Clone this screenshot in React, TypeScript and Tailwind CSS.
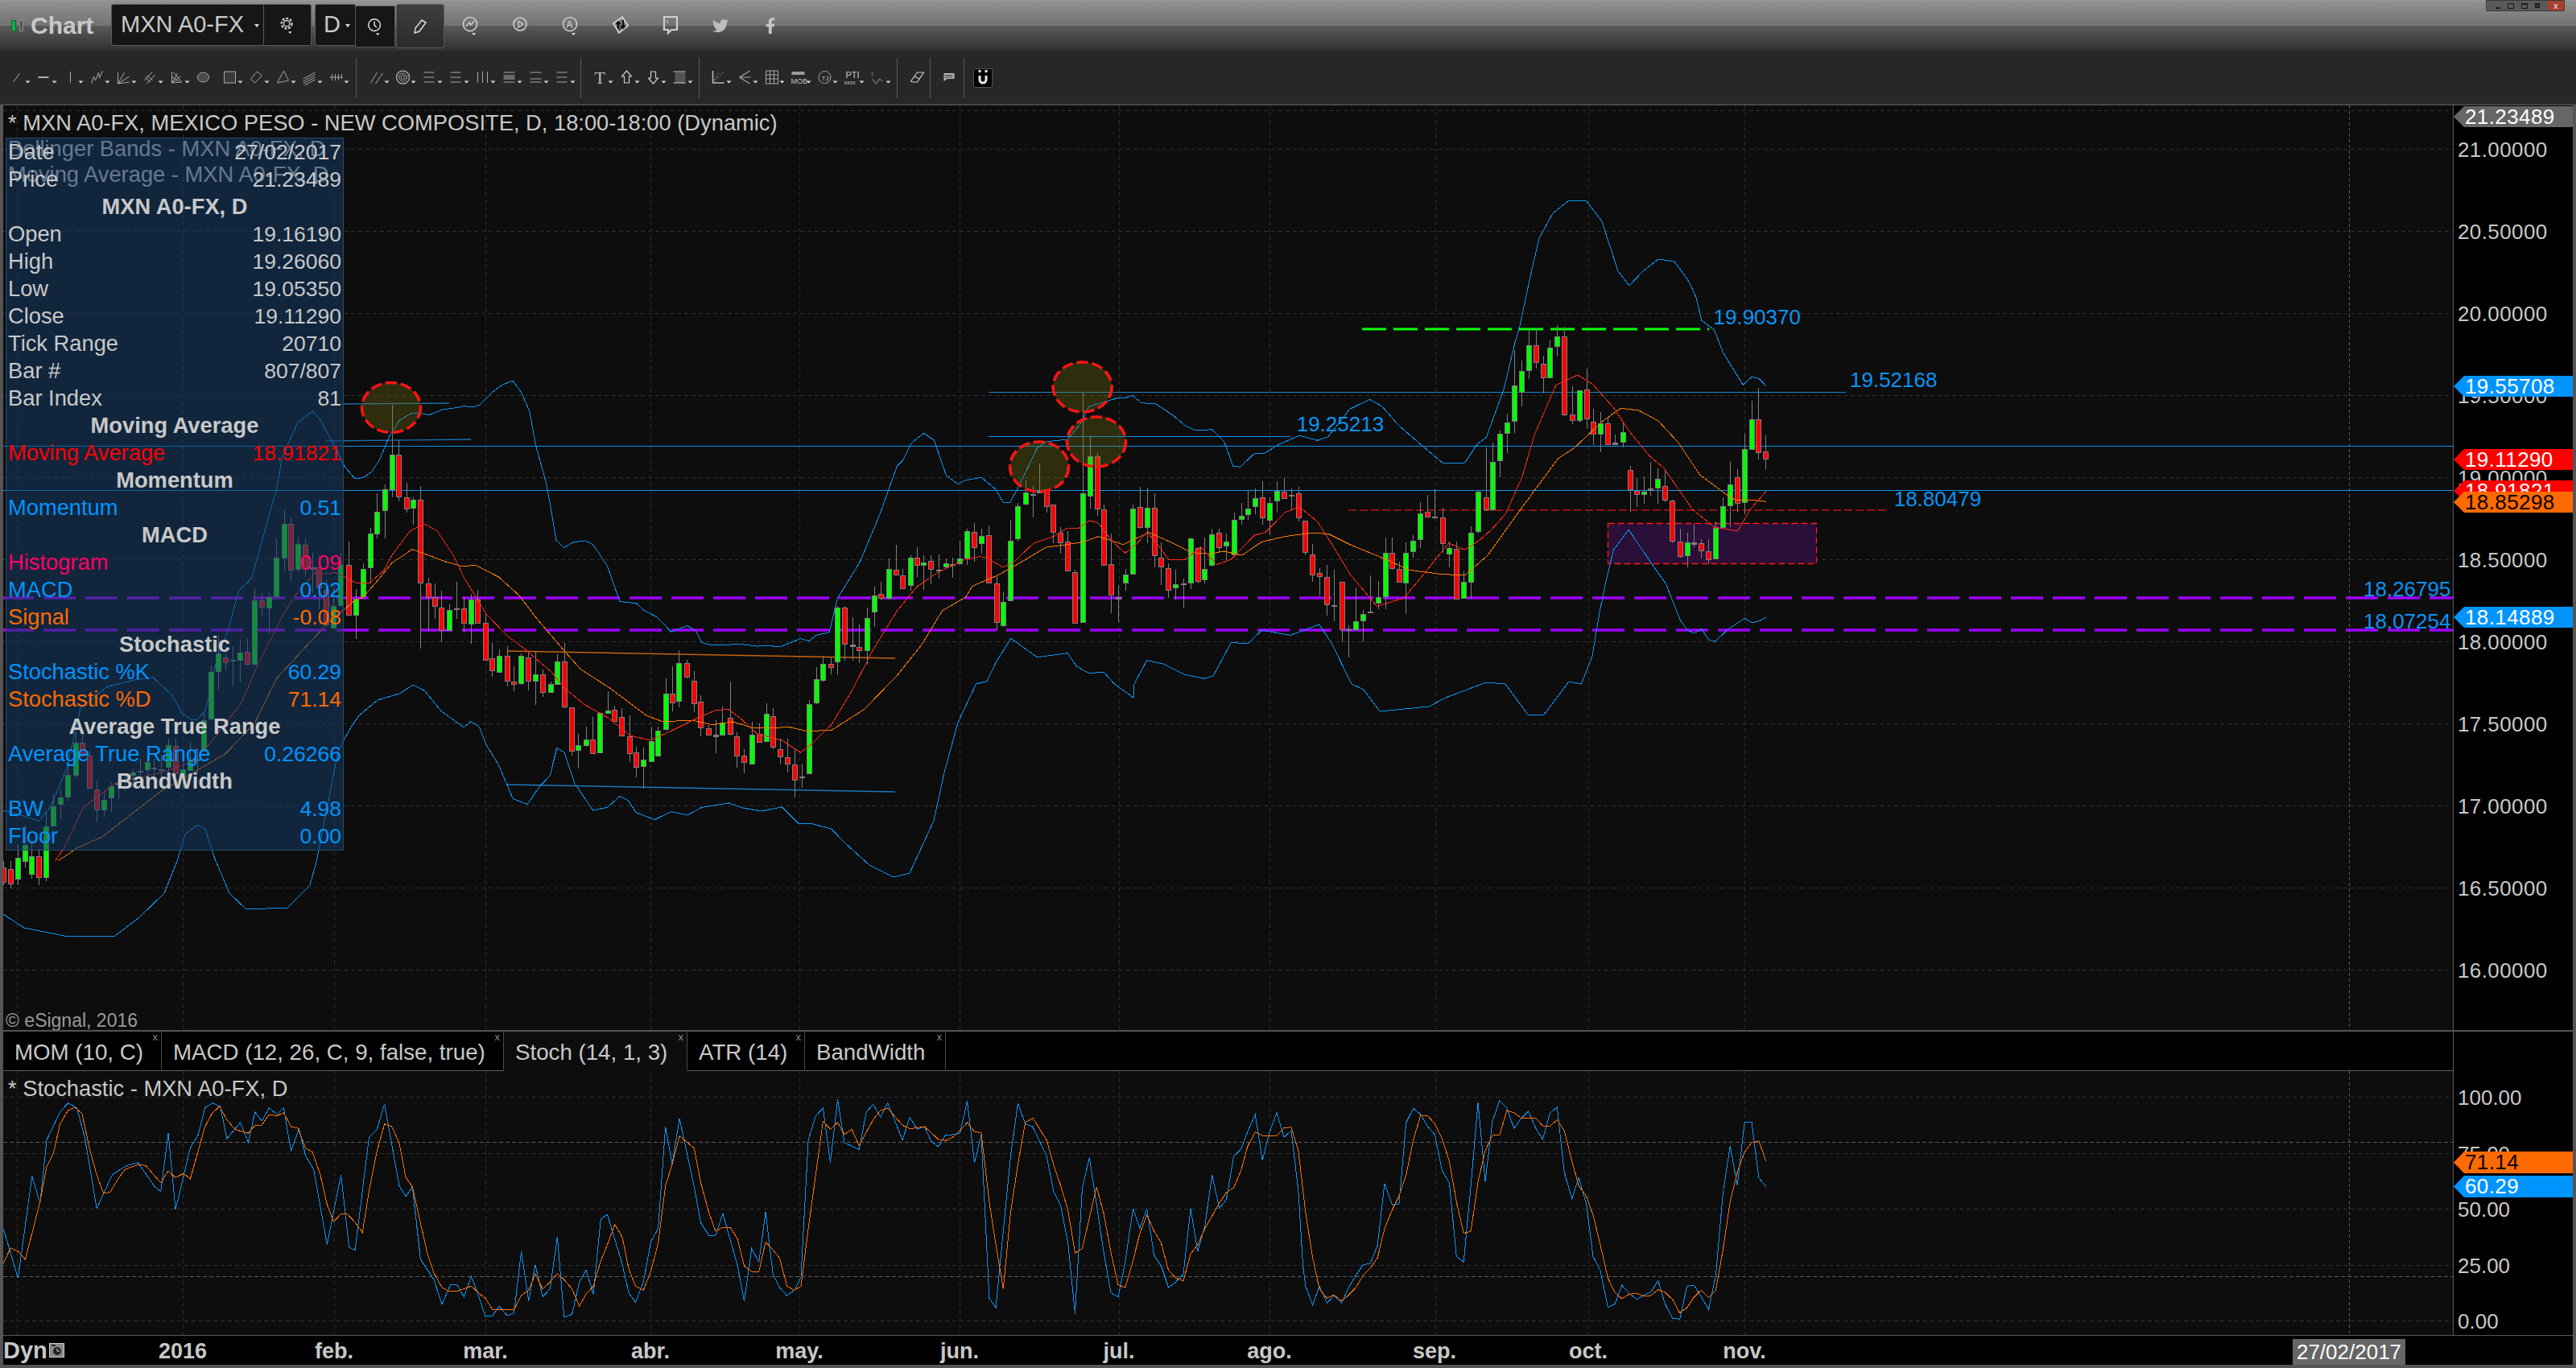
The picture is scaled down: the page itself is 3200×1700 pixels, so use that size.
import React from "react";
import { FaTwitter, FaFacebookF } from "react-icons/fa";

type Pt = [number, number];
const seg = (ox: number, sx: number, oy: number, sy: number, s: string): Pt[] =>
  s.trim().split(/\s+/).map((p) => {
    const [a, b] = p.split(",").map(Number);
    return [ox + a / sx, oy + b / sy] as Pt;
  });
const Z3 = (s: string) => seg(0, 3, 130, 3, s);
const Z4 = (s: string) => seg(0, 3, 570, 3, s);
const Z8 = (s: string) => seg(1150, 2.24, 400, 3, s);
const Z9 = (s: string) => seg(1750, 2.24, 350, 3, s);
const Z10 = (s: string) => seg(400, 1.96, 430, 2.613, s);
const R = (s: string) => seg(0, 1, 0, 1, s);
const pts = (a: Pt[]) => a.map((p) => p[0].toFixed(1) + "," + p[1].toFixed(1)).join(" ");

const upper = [
  ...Z4("10,1310 80,1330 145,1350 190,1295 250,1150 300,930 400,850 500,825 570,815 640,880 680,950 710,972 735,972 765,940 780,880 805,760 850,640 890,490 925,460 940,440 1000,220 1030,118 1050,0"),
  ...Z3("1080,1250 1110,1185 1165,1143 1190,1170 1240,1260 1285,1350"),
  ...Z10("80,430 100,428 120,410 140,370 165,290 190,240 220,217 240,218 260,224 295,206 330,200 345,195 370,198 385,190 415,150 440,125 465,113 485,150 505,210 520,320 545,440 555,510 570,630 590,655 610,638 640,632 660,645 695,715 725,830 765,835 780,855 815,880 850,928 890,908 910,925 925,963 950,972 1020,968 1060,975 1080,972 1115,977 1165,950 1185,958 1205,938 1235,930 1255,820 1310,700 1360,540 1400,390 1415,370 1435,315 1465,283 1490,305 1520,420 1548,448"),
  ...Z8("112,590 155,580 195,625 215,672 235,672 260,610 310,470 335,447 395,438 430,380 455,315 500,298 535,283 555,284 575,274 600,302 640,305 690,350 720,385 745,402 775,405 795,400 830,445 855,538 875,541 915,490 940,492 985,455 1040,424 1090,442 1120,428 1180,325 1235,289 1270,315 1315,385 1380,460 1440,528 1500,525 1535,455 1560,430"),
  ...Z9("265,400 295,230 310,160 335,0"),
  ...R("1912,296 1929,265 1949,249 1970,249 1990,275 2010,337 2024,355 2041,337 2060,322 2080,325"),
  ...Z9("780,0 800,60 815,145 850,180 875,265 930,385 955,355 975,362 995,390"),
];
const lower = [
  ...R("4,1136 30,1153 80,1163 143,1163 173,1140 204,1110"),
  ...Z4("660,1500 690,1400 735,1365 765,1380 800,1490"),
  ...R("285,1110 306,1130 357,1128 385,1100"),
  ...Z4("1180,1500 1260,1090"),
  ...Z10("65,1250 90,1200 135,1150 190,1128 222,1100 250,1120 290,1185 345,1238 362,1220 382,1235 400,1295 430,1360 465,1470 500,1488 530,1430 555,1395 572,1305 590,1320 615,1420 660,1508 695,1498 725,1462 745,1475 765,1515 810,1538 850,1512 890,1523 925,1498 990,1484 1025,1500 1070,1510 1120,1497 1160,1550 1190,1550 1240,1568"),
  ...R("1050,1048 1080,1075 1110,1090 1130,1085 1160,1020 1173,960 1190,898"),
  ...Z8("140,1350 170,1340 195,1270 237,1180 310,1250 395,1235 420,1285 455,1310 495,1305 525,1350"),
  ...R("1408,867"),
  ...Z8("580,1350 615,1262 660,1275 720,1315 775,1330 800,1320 820,1270 850,1195 895,1200 935,1150 1015,1168 1095,1128 1130,1200 1185,1350"),
  ...R("1694,857 1714,884 1775,878 1796,867 1846,848 1870,850 1898,888 1918,888 1949,847"),
  ...Z9("480,1500 510,1400 530,1240 550,1110 570,1000 612,925 680,1060 715,1125 755,1260 775,1300 795,1310 815,1295 835,1335 852,1342 890,1295 935,1255 955,1272 975,1265 995,1250"),
];
const red = [
  ...Z4("205,1500 240,1450 310,1300 430,1210 600,1170 720,1130 800,1040 900,910 960,770 1050,590 1100,510 1180,420 1200,430 1250,425"),
  ...Z10("40,740 85,770 115,770 150,730 170,680 215,600 250,578 280,600 320,680 345,750 400,870 450,940 490,980 560,1060 590,1110 640,1165 700,1210 750,1265 800,1280 850,1250 910,1210 960,1182 990,1180 1020,1210 1060,1260 1120,1280 1165,1320 1190,1295 1240,1230 1290,1120 1340,990 1400,860 1450,780 1500,735"),
  ...Z8("110,885 150,875 170,880 215,915 245,895 300,825 355,800 395,768 425,770 455,740 480,750 520,820 555,862 585,830 615,785 640,820 675,885 720,888 765,840 810,905 850,885 915,795 945,785 1000,710 1040,690 1090,745 1140,850 1180,940 1255,1060 1330,1030 1380,950 1455,825 1500,850 1540,815"),
  ...Z9("230,925 270,865 315,730 350,570 410,385 470,348 510,380 570,470 615,560 670,650 710,695 790,850 850,915 915,930 950,850 995,780"),
];
const orange = [
  ...Z4("215,1500 290,1450 380,1410 600,1240 840,1100 950,985 1030,820 1150,690 1215,620 1320,530"),
  ...Z10("100,815 130,770 170,705 220,660 250,675 300,700 340,715 375,712 430,750 480,810 520,880 590,990 630,1050 700,1110 790,1200 830,1220 900,1215 950,1230 1000,1220 1050,1240 1140,1238 1180,1250 1240,1248 1320,1180 1400,1070 1460,970 1510,860"),
  ...Z8("112,1025 130,985 200,945 260,900 335,840 385,832 440,820 480,800 550,830 620,785 680,820 740,860 790,865 830,855 880,870 935,820 1000,800 1070,787 1120,790 1180,830 1280,885 1345,925 1430,940 1500,945"),
  ...Z9("220,1020 300,870 415,660 460,620 540,520 590,472 640,480 695,520 750,600 810,720 880,790 910,815 960,815 995,820"),
];

const cnd = (ox: number, sx: number, oy: number, sy: number, s: string) =>
  s.trim().split("\n").map((l) => {
    const p = l.trim().split(/\s+/);
    return {
      x: ox + Number(p[0]) / sx,
      c: p[1],
      t: oy + Number(p[2]) / sy,
      b: oy + Number(p[3]) / sy,
      h: oy + Number(p[4]) / sy,
      l: oy + Number(p[5]) / sy,
    };
  });
const candles = [
  ...cnd(0, 1, 0, 1, `3.6 r 1078 1096 1070 1100
12.6 r 1080 1098 1070 1104
21.5 g 1066 1092 1050 1100
30.5 g 1050 1070 1025 1078
39.4 g 1064 1086 1045 1092
48.4 r 1064 1090 1055 1100
57.3 g 1027 1090 1008 1095`),
  ...cnd(0, 3, 570, 3, `199 g 1295 1368 1250 1370
226 g 1262 1285 1230 1340
253 g 1180 1260 1140 1275
281 g 1058 1178 1020 1190
305 r 1058 1105 1020 1110
332 r 1108 1228 1090 1230
359 r 1232 1308 1200 1355
386 g 1273 1308 1240 1335
413 g 1222 1265 1205 1318
440 g 1205 1215 1190 1270
466 g 1195 1205 1180 1240
494 g 1170 1180 1155 1225
521 d 1163 1167 1120 1215
548 g 1130 1158 1100 1195
574 d 1151 1155 1120 1190
601 d 1157 1160 1105 1195
628 g 1068 1150 1045 1190
655 r 1070 1172 1040 1185
682 g 1158 1180 1100 1230
709 g 1125 1160 1060 1165
735 d 1120 1125 1080 1170
760 g 975 1090 950 1095
787 g 795 970 770 975
814 g 725 790 660 860
841 r 740 757 700 790
868 d 750 754 700 850
895 g 722 748 675 830
922 r 720 765 672 770
949 g 527 765 482 770
976 r 527 552 500 585
1003 g 517 555 500 655
1030 g 370 513 300 515
1058 g 242 367 192 420
1084 r 242 413 220 458
1111 g 318 412 290 420
1138 r 320 410 300 440
1165 d 405 410 350 500
1189 r 405 480 360 560
1216 r 490 620 450 625
1243 g 548 628 480 630
1270 g 395 545 350 550`),
  ...cnd(400, 1.96, 430, 2.613, `64 r 710 872 635 875
82 g 820 873 790 950
99 g 725 815 705 820
117 g 610 720 590 770
134 g 537 607 478 625
152 g 466 535 450 625
170 g 353 465 190 490
187 r 353 490 305 505
205 r 491 527 443 542
222 g 498 525 490 580
240 r 498 767 455 982
258 r 771 815 752 925
275 r 815 845 770 885
291 r 850 923 795 962
309 g 858 923 840 925
327 d 853 856 765 885
344 r 853 900 815 930
362 g 822 900 805 968
379 r 822 897 792 900
397 r 900 1020 870 1022
414 r 1015 1054 965 1075
432 g 1007 1060 985 1062
450 r 1007 1088 975 1105
467 r 1090 1098 1040 1120
485 g 1007 1096 998 1100
502 r 1010 1087 990 1118
520 g 1066 1088 990 1165
538 r 1065 1123 1050 1140
556 g 1098 1125 1090 1127
573 g 1025 1097 1000 1100
589 r 1025 1172 965 1175
607 r 1174 1315 1172 1330
624 g 1297 1313 1260 1372
642 g 1278 1297 1235 1300
659 r 1279 1323 1205 1325
677 g 1192 1320 1190 1322
695 g 1183 1190 1120 1192
712 r 1180 1216 1168 1218
730 r 1204 1265 1175 1268
748 r 1266 1320 1200 1350
765 r 1320 1367 1300 1400
783 g 1344 1365 1305 1437
801 g 1284 1349 1235 1352
818 g 1248 1328 1235 1332
836 g 1130 1245 1080 1248
853 r 1128 1157 1040 1185
869 g 1030 1153 988 1172
887 r 1030 1075 1018 1078
905 r 1086 1158 1055 1188
922 r 1156 1240 1135 1268
940 r 1242 1263 1230 1265
958 d 1262 1266 1215 1322
975 g 1224 1263 1170 1265
993 r 1208 1261 1090 1265
1010 r 1266 1328 1255 1368
1028 r 1331 1352 1310 1388
1046 g 1261 1354 1220 1360
1064 r 1259 1285 1225 1285
1081 g 1193 1281 1160 1285
1098 r 1202 1300 1175 1308
1116 r 1310 1333 1275 1360
1133 r 1334 1356 1275 1385
1151 r 1358 1407 1310 1465
1168 d 1397 1400 1355 1435
1185 g 1162 1386 1150 1390
1203 g 1083 1160 1042 1162
1220 g 1032 1083 1005 1090
1238 r 1032 1043 1012 1065
1255 g 850 1025 845 1068
1273 r 850 968 843 1022
1291 d 970 975 880 1022
1308 r 978 988 905 1030
1326 g 884 988 850 1035
1344 g 810 862 780 912
1361 r 804 818 765 825
1379 g 725 820 690 822
1397 r 727 743 645 745
1414 r 746 787 725 790
1432 g 688 777 680 795
1449 r 688 711 652 750
1465 g 702 710 680 792`),
  ...cnd(1150, 2.24, 400, 3, `14 r 892 922 870 978
35 d 925 929 868 958
55 g 901 913 882 922
75 d 904 907 880 955
95 g 883 901 815 905
115 g 781 881 770 905
135 r 784 840 750 895
155 g 799 827 770 865
175 r 796 973 760 975
196 r 976 1120 948 1150
216 g 1045 1132 1005 1137
236 g 817 1040 738 1042
256 g 688 809 675 820
277 g 637 680 590 683
297 d 643 646 612 730
315 d 631 637 527 640
335 r 625 688 625 712
355 r 682 785 682 825
375 r 787 823 765 865
395 r 820 928 780 930
415 r 934 1123 925 1125
436 g 640 1120 263 1122
456 g 502 649 430 697
476 r 502 697 490 722
496 r 698 905 680 905
516 r 904 1018 790 1085
536 d 1027 1032 985 1120
556 g 943 973 922 1002
576 g 695 937 680 938
596 r 691 767 615 770
616 g 694 767 618 825
636 r 694 870 640 915
655 r 880 913 822 980
675 r 917 997 900 1030
695 g 977 988 925 1035
716 d 976 979 958 1068
736 g 806 972 805 995
756 r 842 964 840 975
776 g 920 960 805 975
796 g 791 905 770 912
816 r 785 838 770 862
836 g 820 835 790 888
857 g 737 867 710 868
877 g 722 733 675 755
897 g 695 717 630 738
917 g 657 688 622 718
937 r 653 727 595 755
957 g 674 736 655 795
977 g 630 667 595 710
996 r 632 655 580 660
1016 d 645 649 620 700
1036 r 640 730 615 745
1056 r 742 858 740 870
1076 r 866 940 828 968
1096 r 937 948 918 1020
1116 r 950 1053 905 1095
1136 d 1057 1060 925 1115
1157 r 970 1146 970 1195
1177 d 1147 1150 1130 1252
1197 g 1115 1146 990 1150
1217 g 1088 1111 1075 1195
1237 d 1081 1085 945 1085
1258 g 1027 1047 965 1070
1278 g 860 1023 805 1070
1298 r 860 918 805 925
1316 r 922 970 895 970
1336 g 860 970 822 1090`),
  ...cnd(1750, 2.24, 350, 3, `12 g 967 1007 945 1028
32 g 865 962 822 992
52 r 858 876 795 880
72 d 877 881 775 880
93 r 880 977 843 1010
113 g 993 1015 970 1065
133 r 995 1180 970 1182
153 g 1120 1180 1080 1182
173 g 937 1120 912 1182
193 g 784 931 778 940
214 r 805 850 618 855
233 g 673 850 600 855
254 g 568 668 555 728
274 g 525 565 492 638
294 g 388 520 255 565
313 g 333 411 295 465
333 g 238 331 175 362
353 r 238 301 175 325
373 r 307 358 277 418
393 g 247 358 218 360
413 g 205 241 163 278
433 r 205 497 168 500
454 r 496 517 390 530
474 g 406 517 406 525
494 r 403 511 325 548
514 r 523 568 475 610
534 g 529 569 485 635
554 r 529 607 505 610
574 d 601 607 570 610
595 g 562 598 525 617
615 r 703 776 687 858
635 r 779 790 732 840
654 g 782 790 725 828
673 d 771 776 672 797
693 g 736 768 695 828
713 r 763 815 698 822
733 r 817 967 812 975
754 r 970 1025 920 1030
774 g 973 1021 935 1065
794 d 972 977 902 990
814 r 976 1003 960 1033
834 r 1006 1037 960 1053
854 g 918 1031 895 1035
874 g 838 916 805 920
894 g 757 835 668 915
915 r 728 823 700 857
935 g 625 823 567 867
955 g 514 625 443 625
973 r 514 637 395 662
993 r 634 661 572 698`),
];

const Z6 = (s: string) => seg(0, 1.206, 1240, 3, s);
const Z11 = (s: string) => seg(1250, 1.568, 1340, 3, s);
const stochK = [
  ...Z6("5,860 27,1045 48,665 60,765 70,530 90,425 102,392 115,410 127,520 145,785 168,660 190,625 207,615 232,705 241,722 252,505 263,790 285,560 297,510 307,410 318,392 330,405 340,525 360,465 372,540 382,425 392,460 403,410 415,435 425,410 436,570 448,490 458,590 470,640 490,920 511,660 523,930 532,940 553,520 565,490 576,395 598,700 608,740 618,705 630,975 650,1050 662,1143 675,1070 685,1070 695,1115 706,1038 717,1110 727,1187 738,1185 748,1150 760,1185 770,1175 781,945 792,1130 802,995 813,1115 824,1085 835,890 845,1190 857,1180 868,1060 878,1015 889,1105 900,825 910,808 921,900 932,990 942,1100 952,1135 964,1060 975,910 986,860 997,480 1007,620 1018,450 1040,705 1050,840 1062,885 1072,885 1083,805 1105,1000 1115,1132 1126,935 1137,985 1147,797 1158,1030 1168,1080 1179,1110 1190,1090 1200,1040 1211,530 1222,440 1233,410 1244,615 1255,378 1265,540 1287,565 1298,425 1308,397 1319,445 1330,392 1352,530 1363,445 1374,490 1385,480 1395,535 1406,555 1417,510 1427,510 1438,505 1449,385 1460,615 1470,510 1482,1120 1492,1155 1514,590 1525,392 1536,470 1547,480 1568,590"),
  ...Z11("92,420 106,475 120,610 134,878 148,410 162,295 176,470 190,650 204,800 218,815 232,680 247,485 260,560 274,487 288,660 302,700 316,780 330,760 345,730 359,485 373,645 387,550 401,360 415,485 429,450 443,290 457,265 470,200 485,135 499,305 513,200 527,128 541,220 555,195 569,420 578,700 583,775 597,845 610,775 625,838 638,810 653,838 667,780 681,735 695,695 709,690 723,625 737,392 752,472 765,468 779,165 793,112 807,135 821,180 835,210 849,345 863,390 877,665 891,685 905,400 919,90 933,385 947,160 961,83 975,110 989,187 1003,150 1017,122 1031,185 1045,228 1059,130 1073,107 1087,350 1102,450 1115,370 1130,470 1143,665 1157,715 1172,855 1186,840 1199,772 1213,800 1228,825 1242,808 1255,798 1270,755 1283,840 1298,895 1312,898 1326,775 1340,772 1354,815 1368,862 1382,735 1396,430 1410,252 1424,398 1438,165 1452,163 1466,372 1480,403"),
];
const stochD = [
  ...Z6("5,990 16,932 27,945 38,975 60,760 70,630 80,580 90,470 102,420 112,408 123,432 134,560 145,660 155,728 165,725 177,675 187,640 207,622 218,625 232,665 241,690 252,645 263,670 275,655 285,675 297,570 307,480 318,430 329,405 340,455 352,490 372,505 382,475 392,475 403,435 415,440 425,428 436,480 446,485 458,560 468,575 480,660 490,770 500,835 511,805 520,805 533,840 543,875 553,720 565,570 576,470 587,480 598,540 608,670 618,705 630,840 640,950 650,1025 662,1080 672,1093 685,1093 695,1085 706,1075 717,1100 727,1120 738,1162 770,1162 781,1110 792,1090 802,1030 813,1085 824,1060 835,1028 845,1050 857,1085 868,1150 878,1105 889,1075 900,980 910,920 921,845 932,890 942,1010 952,1075 964,1090 975,1020 986,915 997,700 1007,620 1018,515 1040,560 1050,690 1062,800 1072,870 1083,855 1094,855 1105,900 1115,1000 1126,1020 1137,1020 1147,910 1158,940 1168,970 1179,1075 1190,1090 1200,1075 1211,860 1222,660 1233,460 1244,490 1255,465 1265,510 1276,490 1287,550 1298,500 1308,455 1319,420 1330,412 1352,475 1363,488 1385,480 1406,528 1417,532 1427,520 1438,495 1449,465 1460,500 1470,502 1482,760 1492,920 1503,1085 1514,800 1525,620 1536,465 1547,448 1568,530"),
  ...Z11("92,320 106,400 120,490 134,652 148,635 162,520 176,405 190,505 204,650 218,770 232,780 247,680 260,580 274,510 288,570 302,615 316,715 330,745 345,755 359,655 373,620 387,560 415,465 429,425 443,408 457,345 470,255 485,200 499,213 527,213 541,185 555,182 569,270 583,500 597,670 610,785 625,820 638,808 653,830 667,808 681,780 695,735 709,708 723,670 737,560 752,490 765,440 779,360 793,230 807,138 821,140 835,170 849,225 863,310 877,460 891,578 905,570 919,385 933,270 947,212 961,212 975,120 989,128 1003,148 1031,148 1045,177 1059,178 1073,155 1087,195 1102,310 1115,400 1130,440 1143,510 1157,620 1172,745 1186,800 1199,822 1213,805 1228,802 1242,812 1255,810 1270,788 1283,797 1298,825 1312,875 1326,855 1340,815 1354,790 1368,818 1382,790 1396,640 1410,460 1424,350 1438,275 1452,240 1466,233 1480,310"),
];

const months = [21, 227, 415, 603, 808, 993, 1192, 1390, 1577, 1782.5, 1973, 2167];
const priceY = (p: number) => 185.4 + (21 - p) * 204;
const priceGrid = [21.2349, 21, 20.5, 20, 19.5, 19, 18.5, 18, 17.5, 17, 16.5, 16];
const BLUE = "#0a94f5";

function VGrid({ y1, y2 }: { y1: number; y2: number }) {
  return (
    <>
      {months.map((m) => (
        <line key={m} x1={Math.round(m) + 0.5} x2={Math.round(m) + 0.5} y1={y1} y2={y2} stroke="#2c2c2c" strokeDasharray="5 4" />
      ))}
      <line x1={2918.5} x2={2918.5} y1={y1} y2={y2} stroke="#5a5a5a" strokeDasharray="4 3" />
    </>
  );
}

function MainChart() {
  return (
    <svg className="block w-full h-full" viewBox="4 131 3043 1149">
      {priceGrid.map((p) => (
        <line key={p} x1={4} x2={3047} y1={Math.round(priceY(p)) + 0.5} y2={Math.round(priceY(p)) + 0.5} stroke="#2f2f2f" strokeDasharray="5 4" />
      ))}
      <VGrid y1={131} y2={1280} />
      <rect x={1997.5} y={650.5} width={259} height={50} fill="#2a0f38" stroke="#ff1a1a" strokeWidth={1.3} strokeDasharray="8 4" />
      <line x1={4} x2={3047} y1={554.5} y2={554.5} stroke={BLUE} />
      <line x1={4} x2={3047} y1={609.5} y2={609.5} stroke={BLUE} />
      <line x1={1228} x2={2293} y1={487.5} y2={487.5} stroke="#1284cc" />
      <line x1={1228} x2={1603} y1={542.5} y2={542.5} stroke={BLUE} />
      <line x1={423} x2={558} y1={502} y2={501} stroke="#1f6fa8" strokeWidth={1.4} />
      <line x1={405} x2={585} y1={548} y2={546} stroke="#1f6fa8" strokeWidth={1.4} />
      <line x1={630} x2={1112} y1={809} y2={818} stroke="#c8620f" strokeWidth={1.6} />
      <line x1={630} x2={1112} y1={975} y2={984} stroke="#1a78bd" strokeWidth={1.6} />
      <line x1={1675} x2={2346} y1={634} y2={634} stroke="#8e1212" strokeWidth={2} strokeDasharray="10 4" />
      <line x1={2} x2={3047} y1={743} y2={743} stroke="#a000ff" strokeWidth={3.5} strokeDasharray="40 12" />
      <line x1={2} x2={3047} y1={783} y2={783} stroke="#a000ff" strokeWidth={3.5} strokeDasharray="40 12" />
      <line x1={1692} x2={2123} y1={409} y2={409} stroke="#00ff00" strokeWidth={3} strokeDasharray="30 9" />
      <polyline points={pts(upper)} fill="none" stroke="#0a94f5" shapeRendering="crispEdges" />
      <polyline points={pts(lower)} fill="none" stroke="#0a94f5" shapeRendering="crispEdges" />
      {candles.map((c, i) => {
        const x = Math.round(c.x) + 0.5;
        const fill = c.c === "g" ? "#00ff00" : c.c === "r" ? "#ff0000" : "#7f7f7f";
        return (
          <g key={i} shapeRendering="crispEdges">
            <line x1={x} x2={x} y1={c.h} y2={c.l} stroke="#7f7f7f" />
            <rect x={x - 3} y={Math.round(c.t) + 0.5} width={6} height={Math.max(1, Math.round(c.b - c.t))} fill={fill} stroke="#7f7f7f" />
          </g>
        );
      })}
      <polyline points={pts(orange)} fill="none" stroke="#ff7a00" shapeRendering="crispEdges" />
      <polyline points={pts(red)} fill="none" stroke="#ff2a1a" shapeRendering="crispEdges" />
      {[[486, 506.5], [1344.6, 481], [1362, 549], [1291, 580]].map(([cx, cy]) => (
        <ellipse key={cx} cx={cx} cy={cy} rx={36.5} ry={31} fill="#7a7a10" fillOpacity={0.3} stroke="#ff1414" strokeWidth={3.5} strokeDasharray="14 5" />
      ))}
      <g fill={BLUE} fontSize={26}>
        <text x={2128.5} y={403}>19.90370</text>
        <text x={2298} y={481}>19.52168</text>
        <text x={1610.7} y={536}>19.25213</text>
        <text x={2352.7} y={629}>18.80479</text>
        <text x={2936} y={741}>18.26795</text>
        <text x={2936} y={781}>18.07254</text>
      </g>
    </svg>
  );
}

function StochChart() {
  return (
    <svg className="block w-full h-full" viewBox="4 1331 3043 328">
      {[1363, 1433, 1502, 1572, 1641].map((y) => (
        <line key={y} x1={4} x2={3047} y1={y + 0.5} y2={y + 0.5} stroke="#2f2f2f" strokeDasharray="5 4" />
      ))}
      {[1419, 1586].map((y) => (
        <line key={y} x1={4} x2={3047} y1={y + 0.5} y2={y + 0.5} stroke="#5c5c5c" strokeDasharray="5 3" />
      ))}
      <VGrid y1={1331} y2={1659} />
      <polyline points={pts(stochK)} fill="none" stroke="#0a94f5" shapeRendering="crispEdges" />
      <polyline points={pts(stochD)} fill="none" stroke="#ff7000" shapeRendering="crispEdges" />
    </svg>
  );
}

const infoRows: { l?: string; v?: string; h?: string; c?: string }[] = [
  { l: "Date", v: "27/02/2017" },
  { l: "Price", v: "21.23489" },
  { h: "MXN A0-FX, D" },
  { l: "Open", v: "19.16190" },
  { l: "High", v: "19.26060" },
  { l: "Low", v: "19.05350" },
  { l: "Close", v: "19.11290" },
  { l: "Tick Range", v: "20710" },
  { l: "Bar #", v: "807/807" },
  { l: "Bar Index", v: "81" },
  { h: "Moving Average" },
  { l: "Moving Average", v: "18.91821", c: "text-[#ff0000]" },
  { h: "Momentum" },
  { l: "Momentum", v: "0.51", c: "text-[#0094ff]" },
  { h: "MACD" },
  { l: "Histogram", v: "0.09", c: "text-[#ff0066]" },
  { l: "MACD", v: "0.02", c: "text-[#0094ff]" },
  { l: "Signal", v: "-0.08", c: "text-[#ff6a00]" },
  { h: "Stochastic" },
  { l: "Stochastic %K", v: "60.29", c: "text-[#0094ff]" },
  { l: "Stochastic %D", v: "71.14", c: "text-[#ff6a00]" },
  { h: "Average True Range" },
  { l: "Average True Range", v: "0.26266", c: "text-[#0094ff]" },
  { h: "BandWidth" },
  { l: "BW", v: "4.98", c: "text-[#0094ff]" },
  { l: "Floor", v: "0.00", c: "text-[#0094ff]" },
];

function InfoPanel() {
  return (
    <div className="absolute left-[3px] top-[40px] w-[420px] flex flex-col bg-[rgba(22,58,99,0.56)] border border-[#2b4a66] px-[2px] text-[26px] leading-[34px] text-[#c8c8c8]">
      {infoRows.map((r, i) =>
        r.h ? (
          <div key={i} className="h-[34px] text-center font-bold text-[27.3px]">{r.h}</div>
        ) : (
          <div key={i} className={"h-[34px] flex justify-between " + (r.c || "")}>
            <span className="text-[27.3px]">{r.l}</span>
            <span className="text-[26.5px]">{r.v}</span>
          </div>
        )
      )}
    </div>
  );
}

function TagLabel({ top, text, bg, fg = "text-white", h = "h-[26px]" }: { top: number; text: string; bg: string; fg?: string; h?: string }) {
  return (
    <div
      style={{ top }}
      className={"absolute left-0 w-full pl-[14px] text-[26px] tracking-[0.4px] leading-[26px] [clip-path:polygon(13px_0,100%_0,100%_100%,13px_100%,0_50%)] " + h + " " + bg + " " + fg}
    >
      {text}
    </div>
  );
}

function PriceAxis() {
  const labels = ["21.00000", "20.50000", "20.00000", "19.50000", "19.00000", "18.50000", "18.00000", "17.50000", "17.00000", "16.50000", "16.00000"];
  return (
    <div className="relative w-[149px] bg-black border-l border-[#5a5a5a] text-[#c8c8c8] overflow-hidden">
      {labels.map((l) => (
        <div key={l} style={{ top: priceY(parseFloat(l)) - 131 - 14 }} className="absolute left-[5px] text-[26px] tracking-[0.4px] leading-[30px]">
          {l}
        </div>
      ))}
      <TagLabel top={1} text="21.23489" bg="bg-[#666666]" />
      <TagLabel top={336} text="19.55708" bg="bg-[#0094ff]" />
      <TagLabel top={427} text="19.11290" bg="bg-[#ff0000]" />
      <TagLabel top={466} text="18.91821" bg="bg-[#ff0000]" />
      <TagLabel top={480} text="18.85298" bg="bg-[#ff6a00]" fg="text-black" />
      <TagLabel top={623} text="18.14889" bg="bg-[#0094ff]" />
    </div>
  );
}

function StochAxis() {
  const labels: [string, number][] = [["100.00", 1363], ["75.00", 1433], ["50.00", 1502], ["25.00", 1572], ["0.00", 1641]];
  return (
    <div className="relative w-[149px] bg-black border-l border-[#5a5a5a] text-[#c8c8c8] overflow-hidden">
      {labels.map(([l, y]) => (
        <div key={l} style={{ top: y - 1331 - 14 }} className="absolute left-[5px] text-[26px] leading-[30px]">
          {l}
        </div>
      ))}
      <TagLabel top={100} text="71.14" bg="bg-[#ff6a00]" fg="text-black" h="h-[27px]" />
      <TagLabel top={130} text="60.29" bg="bg-[#0094ff]" h="h-[27px]" />
    </div>
  );
}

const tabs = [
  { t: "MOM (10, C)", w: "w-[197px]" },
  { t: "MACD (12, 26, C, 9, false, true)", w: "w-[425px]" },
  { t: "Stoch (14, 1, 3)", w: "w-[228px]", active: true },
  { t: "ATR (14)", w: "w-[146px]" },
  { t: "BandWidth", w: "w-[175px]" },
];

function Tabs() {
  return (
    <div className="flex h-[49px]">
      <div className="flex flex-1 border-b border-[#5a5a5a] bg-black">
        {tabs.map((t) => (
          <div
            key={t.t}
            className={
              "relative flex items-center pl-[14px] pt-[3px] text-[27.7px] text-[#c8c8c8] h-[49px] border-r border-[#4a4a4a] " +
              t.w +
              (t.active ? " bg-[#0d0d0d] border-b border-b-[#0d0d0d]" : "")
            }
          >
            {t.t}
            <span className="absolute right-[4px] top-0 text-[13px] leading-[14px] text-[#8a8a8a]">x</span>
          </div>
        ))}
      </div>
      <div className="w-[149px] bg-black border-l border-[#5a5a5a]" />
    </div>
  );
}

function TimeAxis() {
  const ls: [string, number][] = [["2016", 227], ["feb.", 415], ["mar.", 603], ["abr.", 808], ["may.", 993], ["jun.", 1192], ["jul.", 1390], ["ago.", 1577], ["sep.", 1782], ["oct.", 1973], ["nov.", 2167]];
  return (
    <div className="relative h-[36px] bg-black text-[#c8c8c8] font-bold text-[27px] leading-[38px]">
      <div className="flex items-center h-full">
        <span className="text-[29px] leading-[38px]">Dyn</span>
        <svg width="19" height="18" viewBox="0 0 19 18" className="ml-[2px]">
          <rect x="0.5" y="0.5" width="18" height="17" fill="#888" stroke="#ccc" />
          <circle cx="10" cy="10" r="5" fill="#222" />
          <path d="M10 7v3h3" stroke="#ddd" fill="none" />
          <path d="M3 3h5" stroke="#222" strokeWidth="2" />
        </svg>
      </div>
      {ls.map(([l, x]) => (
        <span key={l} style={{ left: x - 4 }} className="absolute top-0 -translate-x-1/2">
          {l}
        </span>
      ))}
      <span className="absolute left-[2844px] top-[4px] w-[140px] h-[32px] bg-[#666666] text-white font-normal text-[26px] leading-[32px] text-center">
        27/02/2017
      </span>
    </div>
  );
}

/* ---------- icons ---------- */
function TopIcon({ children }: { children: React.ReactNode }) {
  return (
    <div className="w-[62px] h-[52px] flex items-center justify-center shrink-0">
      <svg width="24" height="26" viewBox="0 0 24 26" fill="none" stroke="#cfcfcf" strokeWidth="1.6">
        {children}
      </svg>
    </div>
  );
}
const tick = <path d="M13 22h5l-2.5 3z" fill="#e0e0e0" stroke="none" />;

function TB({ children, arrow = true }: { children: React.ReactNode; arrow?: boolean }) {
  return (
    <svg width="33" height="36" viewBox="0 0 33 36" fill="none" stroke="#a8a8a8" className="shrink-0">
      <g transform="translate(4.5 6)">{children}</g>
      {arrow && <path d="M27.5 22.5h6l-3 3z" fill="#dcdcdc" stroke="none" transform="translate(-1 0)" />}
    </svg>
  );
}
const Div = () => <div className="w-px h-[50px] bg-[#5a5a5a] shrink-0" />;

function Toolbar() {
  return (
    <div className="h-[66px] bg-[#272727] flex items-center pl-[5px] border-b border-[#3c3c3c] [&>svg]:-translate-y-[1px]">
      <TB><path d="M7 18L15 7" /></TB>
      <TB><path d="M5 12H18" strokeWidth="1.5" stroke="#ddd" /></TB>
      <TB><path d="M12 5V19" /></TB>
      <TB><path d="M5 20L8 11L10 16L14 6L15 13L19 4" /></TB>
      <TB><path d="M5 20V6M5 20L19 11M5 20L13 6M5 20L19 18" /></TB>
      <TB><path d="M5 16L15 5M8 20L18 9M8 9L15 16M6 12L12 18" /></TB>
      <TB><path d="M6 19L18 18M6 19L17 11M6 19L13 7M6 19V5M8 6L18 18M6 11L15 18" /></TB>
      <TB arrow={false}><ellipse cx="12" cy="12" rx="7" ry="6" fill="#4a4a4a" /></TB>
      <TB><rect x="5" y="5" width="14" height="14" fill="#3a3a3a" /></TB>
      <TB><path d="M5 14L13 5L19 10L10 19Z" /></TB>
      <TB><path d="M5 19L13 4L19 16Z" /></TB>
      <TB><path d="M4 14L19 6M4 17L19 9M4 20L19 12M6 22L19 15" /></TB>
      <TB><path d="M4 12H20M7 8V16M11 8V16M15 8V16M19 8V14" /></TB>
      <div className="w-[8px] shrink-0" />
      <Div />
      <div className="w-[8px] shrink-0" />
      <TB><path d="M5 19L13 6M11 20L20 7" /></TB>
      <TB><circle cx="12" cy="12" r="8" strokeWidth="1.4" /><circle cx="12" cy="12" r="5" /><circle cx="12" cy="12" r="2.5" /></TB>
      <TB><path d="M5 6H18M5 12H18M5 18H18" /></TB>
      <TB><path d="M5 6H18M5 12H18M5 18H18" /></TB>
      <TB><path d="M6 5V19M12 5V19M18 5V19" /></TB>
      <TB><rect x="5" y="9" width="14" height="6" fill="#6a6a6a" stroke="none" /><path d="M5 6H19M5 18H19" /></TB>
      <TB><path d="M5 6H19" /><path d="M5 14H19M5 18H19" strokeWidth="1.2" /></TB>
      <TB><path d="M5 6H18M5 12H18M5 18H18" /></TB>
      <div className="w-[6px] shrink-0" />
      <Div />
      <div className="w-[7px] shrink-0" />
      <TB><text x="5" y="20" fontSize="22" fill="#bbb" stroke="none" className="[font-family:'Liberation_Serif',serif]">T</text></TB>
      <TB><path d="M12 4L18 11H15V19H9V11H6Z" strokeWidth="1.2" stroke="#ccc" /></TB>
      <TB><path d="M12 20L18 13H15V5H9V13H6Z" strokeWidth="1.2" stroke="#ccc" /></TB>
      <TB><rect x="6" y="6" width="13" height="13" fill="#555" stroke="none" /><path d="M4 5H19M4 19H19" stroke="#ccc" /></TB>
      <div className="w-[7px] shrink-0" />
      <Div />
      <div className="w-[7px] shrink-0" />
      <TB><path d="M5 4V19H19" stroke="#bbb" strokeWidth="1.5" /><path d="M5 19L18 6M5 19L13 5" strokeDasharray="2 2" /></TB>
      <TB><path d="M5 12L18 4M5 12H19M5 12L18 20" strokeWidth="1.2" /></TB>
      <TB><rect x="5" y="4" width="15" height="16" /><path d="M5 9H20M5 14H20M10 4V20M15 4V20" /></TB>
      <TB><rect x="4" y="5" width="16" height="4" fill="#999" stroke="none" /><text x="3" y="20" fontSize="9" fill="#c4c4c4" stroke="none">MOB</text></TB>
      <TB><circle cx="12" cy="12" r="7.5" /><text x="8" y="15.5" fontSize="8" fill="#c4c4c4" stroke="none">TJ</text></TB>
      <TB><text x="5" y="13" fontSize="11" fill="#c4c4c4" stroke="none">PTI</text><text x="3" y="21" fontSize="7" fill="#c4c4c4" stroke="none">xxxx</text></TB>
      <TB><path d="M5 5V11M5 14L10 20L14 14L18 17" stroke="#666" strokeWidth="1.5" /></TB>
      <div className="w-[7px] shrink-0" />
      <Div />
      <div className="w-[7px] shrink-0" />
      <TB arrow={false}><path d="M5 17L13 6H21L13 18H7ZM9 11L16 14" strokeWidth="1.2" stroke="#ccc" /></TB>
      <Div />
      <div className="w-[5px] shrink-0" />
      <TB arrow={false}><path d="M7 7H20V14H11L7 17Z" fill="#bbb" stroke="none" /><path d="M8 9.5H18M8 12H18" stroke="#222" /></TB>
      <div className="w-[3px] shrink-0" />
      <Div />
      <div className="w-[11px] shrink-0" />
      <div className="w-[24px] h-[24px] bg-black border border-[#555] rounded-[2px] flex items-center justify-center shrink-0">
        <svg width="16" height="20" viewBox="0 0 16 20" fill="none">
          <path d="M4 7V12A4 4 0 0 0 12 12V7" stroke="#e8e8e8" strokeWidth="3" />
          <path d="M2.5 1.5h3M10.5 1.5h3" stroke="#e8e8e8" strokeWidth="3" />
        </svg>
      </div>
    </div>
  );
}

function TitleBar() {
  return (
    <div className="relative h-[64px] border-b border-[#2a2a2a] flex items-start bg-[linear-gradient(180deg,#929292_0%,#727272_50%,#5a5a5a_50%,#303030_100%)] border-t border-t-[#9a9a9a]">
      <div className="flex items-center h-[62px] w-[138px] pl-[14px] shrink-0">
        <div className="w-[6px] h-[14px] bg-[#14a94f] border border-[#0a6d30]" />
        <div className="w-[5px] h-[14px] ml-[4px] border border-[#8a8a8a] bg-[#555]" />
        <span className="ml-[9px] text-[30px] font-bold text-[#c9c9c9] leading-none">Chart</span>
      </div>
      <div className="mt-[4px] flex items-stretch w-[249px] h-[52px] bg-[#161616] border border-[#585858] rounded-[3px] shrink-0 text-[#c8c8c8]">
        <div className="w-[189px] flex items-center pl-[11px] text-[29px] border-r border-[#5a5a5a] relative">
          MXN A0-FX
          <svg width="6" height="4" viewBox="0 0 6 4" className="absolute right-[5px] top-[24px]"><path d="M0 0h6L3 4z" fill="#ddd" /></svg>
        </div>
        <div className="flex-1 flex items-center justify-center">
          <svg width="22" height="24" viewBox="0 0 24 26" fill="none" stroke="#d8d8d8">
            <circle cx="11" cy="11" r="4" strokeWidth="1.5" />
            <circle cx="11" cy="11" r="7" strokeWidth="2.4" strokeDasharray="3.2 2" />
            {tick}
          </svg>
        </div>
      </div>
      <div className="ml-[4px] mt-[4px] w-[50px] h-[52px] bg-[#161616] border border-[#585858] border-r-0 rounded-l-[3px] flex items-center pl-[10px] text-[29px] text-[#c8c8c8] relative shrink-0">
        D
        <svg width="6" height="4" viewBox="0 0 6 4" className="absolute right-[6px] top-[24px]"><path d="M0 0h6L3 4z" fill="#ddd" /></svg>
      </div>
      <div className="mt-[6px] w-[50px] h-[52px] bg-[#161616] border border-[#585858] rounded-[2px] flex items-center justify-center shrink-0">
        <svg width="22" height="24" viewBox="0 0 24 26" fill="none" stroke="#e4e4e4" strokeWidth="1.6">
          <circle cx="11" cy="11" r="8" />
          <path d="M11 6V11L14 14" />
          {tick}
        </svg>
      </div>
      <div className="ml-[1px] mt-[4px] w-[60px] h-[55px] border border-[#585858] rounded-[3px] bg-[linear-gradient(180deg,#3f3f3f,#2a2a2a)] flex items-center justify-center shrink-0">
        <svg width="20" height="22" viewBox="0 0 20 22" fill="none" stroke="#dedede" strokeWidth="1.5">
          <path d="M3 19L4 13L12 3L17 6L9 17Z" />
        </svg>
      </div>
      <div className="ml-[2px] flex items-center h-[62px]">
        <TopIcon><circle cx="11" cy="11" r="8.5" /><path d="M6 14L10 9L12 12L16 7" strokeWidth="1.4" />{tick}</TopIcon>
        <TopIcon><circle cx="11" cy="11" r="8" /><path d="M9 7L15 11L9 15Z" strokeWidth="1.3" /></TopIcon>
        <TopIcon><circle cx="11" cy="11" r="8.5" /><text x="6.5" y="15.5" fontSize="12" fill="#dcdcdc" stroke="none">A</text>{tick}</TopIcon>
        <TopIcon>
          <path d="M12 2L21 11L12 22L3 12Z" transform="rotate(12 12 12)" strokeWidth="2" />
          <path d="M9 17V9M6.5 11L9 8L11.5 11M15 6V15M12.5 13L15 16L17.5 13" stroke="#111" strokeWidth="2" />
        </TopIcon>
        <TopIcon><path d="M4 2H20V18H13L9 22V18H4Z" strokeWidth="2.2" /><path d="M8 6V10" strokeWidth="1.2" /></TopIcon>
        <div className="w-[62px] h-[52px] flex items-center justify-center shrink-0 text-[#bdbdbd] text-[20px]"><FaTwitter /></div>
        <div className="w-[62px] h-[52px] flex items-center justify-center shrink-0 text-[#c4c4c4] text-[20px]"><FaFacebookF /></div>
      </div>
      <div className="ml-auto mr-[14px] flex h-[14px] -mt-[1px] w-[98px] rounded-b-[2px] border border-[#3a3a3a] bg-[#5a5a5a] shrink-0">
        <div className="flex-1 flex items-center justify-around px-[6px]">
          <span className="w-[6px] h-[2px] bg-[#1c1c1c] self-end mb-[2px]" />
          <span className="w-[8px] h-[7px] border border-[#1c1c1c]" />
          <span className="w-[8px] h-[7px] border border-[#1c1c1c] border-t-2" />
          <span className="w-[6px] h-[6px] border-2 border-[#1c1c1c]" />
        </div>
        <div className="w-[20px] bg-[#a8402e] flex items-center justify-center text-[11px] leading-none text-[#eee]">x</div>
      </div>
    </div>
  );
}

export default function App() {
  return (
    <div className="w-[3200px] h-[1700px] overflow-hidden flex flex-col bg-[#555555] [font-family:'Liberation_Sans',Arial,sans-serif]">
      <TitleBar />
      <Toolbar />
      <div className="flex flex-col flex-1 pl-[4px] pr-[4px] pb-[4px] pt-[1px] min-h-0">
        <div className="flex h-[1149px] shrink-0">
          <div className="relative flex-1 bg-[#0d0d0d] overflow-hidden">
            <MainChart />
            <div className="absolute left-[6px] top-[7px] text-[27.3px] leading-[30px] text-[#c8c8c8] whitespace-nowrap">
              * MXN A0-FX, MEXICO PESO - NEW COMPOSITE, D, 18:00-18:00 (Dynamic)
            </div>
            <div className="absolute left-[6px] top-[38px] text-[27.3px] leading-[32px] text-[#c8c8c8] whitespace-nowrap">
              <div>Bollinger Bands - MXN A0-FX, D</div>
              <div>Moving Average - MXN A0-FX, D</div>
            </div>
            <InfoPanel />
            <div className="absolute left-[3px] bottom-[-1px] text-[23px] leading-[26px] text-[#9a9a9a]">© eSignal, 2016</div>
          </div>
          <PriceAxis />
        </div>
        <div className="h-[2px] shrink-0" />
        <Tabs />
        <div className="flex h-[328px] shrink-0">
          <div className="relative flex-1 bg-[#0d0d0d] overflow-hidden">
            <StochChart />
            <div className="absolute left-[6px] top-[7px] text-[27.3px] leading-[30px] text-[#c8c8c8]">* Stochastic - MXN A0-FX, D</div>
          </div>
          <StochAxis />
        </div>
        <div className="w-[3043px] h-px bg-[#5a5a5a] shrink-0" />
        <TimeAxis />
      </div>
    </div>
  );
}
